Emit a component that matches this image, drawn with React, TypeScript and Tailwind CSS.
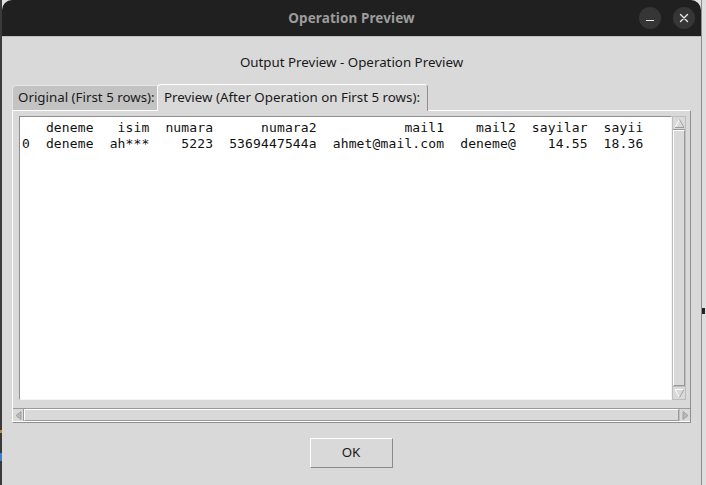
import React from 'react';

const header =
  '   deneme   isim  numara      numara2           mail1    mail2  sayilar  sayii';
const row0 =
  '0  deneme  ah***    5223  5369447544a  ahmet@mail.com  deneme@    14.55  18.36';

const UpArrow = () => (
  <svg width="11" height="11" viewBox="0 0 11 11">
    <path d="M5.5 1.5 L10 9.5 L1 9.5 Z" fill="none" stroke="#ffffff" strokeWidth="1" />
    <path d="M5.5 1.5 L10 9.5" fill="none" stroke="#9a9a9a" strokeWidth="1" />
    <path d="M1 9.5 L10 9.5" fill="none" stroke="#9a9a9a" strokeWidth="1" />
  </svg>
);

const DownArrow = () => (
  <svg width="11" height="11" viewBox="0 0 11 11">
    <path d="M1 1.5 L10 1.5 L5.5 9.5 Z" fill="none" stroke="#ffffff" strokeWidth="1" />
    <path d="M10 1.5 L5.5 9.5" fill="none" stroke="#9a9a9a" strokeWidth="1" />
  </svg>
);

const LeftArrow = () => (
  <svg width="9" height="11" viewBox="0 0 9 11">
    <path d="M2 5.5 L7 1.5 L7 9.5 Z" fill="#b8b8b8" stroke="#a0a0a0" strokeWidth="1" />
  </svg>
);

const RightArrow = () => (
  <svg width="9" height="11" viewBox="0 0 9 11">
    <path d="M7 5.5 L2 1.5 L2 9.5 Z" fill="#b8b8b8" stroke="#a0a0a0" strokeWidth="1" />
  </svg>
);

export default function App() {
  return (
    <div className="w-[706px] h-[485px] flex bg-[#e2e2e2] overflow-hidden font-['Noto_Sans',sans-serif]">
      {/* desktop behind, left edge */}
      <div className="w-[2px] h-full bg-[#3a3a3a] flex flex-col">
        <div className="h-[430px]" />
        <div className="h-[3px] bg-[#c9883a]" />
        <div className="h-[20px]" />
        <div className="h-[8px] bg-[#3a7fd0]" />
      </div>

      {/* window */}
      <div className="w-[700px] h-full flex flex-col border-r border-[#8c8c8c]">
        {/* title bar */}
        <div className="h-[36px] bg-[#202020] rounded-t-[10px] flex items-center relative shrink-0">
          <div className="flex-1 text-center text-[13.5px] font-bold text-[#9c9c9c] tracking-[0.1px]">
            Operation Preview
          </div>
          <div className="absolute right-[6px] top-[7px] flex gap-[12px]">
            <div className="w-[22px] h-[22px] rounded-full bg-[#363636] flex items-center justify-center">
              <div className="w-[8px] h-[1.5px] bg-[#e6e6e6] mt-[5px]" />
            </div>
            <div className="w-[22px] h-[22px] rounded-full bg-[#363636] flex items-center justify-center">
              <svg width="10" height="10" viewBox="0 0 10 10">
                <path d="M1.5 1.5 L8.5 8.5 M8.5 1.5 L1.5 8.5" stroke="#e6e6e6" strokeWidth="1.4" strokeLinecap="round" />
              </svg>
            </div>
          </div>
        </div>

        {/* body */}
        <div className="flex-1 bg-[#d9d9d9] border-t border-[#bdbdbd] flex flex-col px-[10px]">
          <div className="pt-[16px] h-[46px] text-center text-[13.33px] leading-[18px] text-[#1a1a1a]">
            Output Preview - Operation Preview
          </div>

          {/* tabs */}
          <div className="flex items-end h-[27px]">
            <div className="h-[25px] w-[145px] bg-[#c3c3c3] border-t border-l border-[#e6e6e6] rounded-tl-[4px] flex items-center pl-[5px] text-[13.33px] text-[#1a1a1a]">
              Original (First 5 rows):
            </div>
            <div className="h-[27px] w-[271px] bg-[#d9d9d9] border-t border-l border-white border-r-[1px] border-r-[#8f8f8f] rounded-t-[4px] flex items-center pl-[6px] text-[13.33px] text-[#1a1a1a] relative -mb-[1px] z-10">
              Preview (After Operation on First 5 rows):
            </div>
          </div>

          {/* panel */}
          <div className="w-[679px] h-[313px] border-t border-l border-white border-r border-b border-r-[#8f8f8f] border-b-[#8f8f8f] flex flex-col">
            <div className="flex pt-[5px] pl-[6px] pr-[4px] h-[297px]">
              {/* text area */}
              <div className="flex-1 h-[284px] bg-white border-t border-l border-[#8f8f8f] border-r border-b border-r-[#f4f4f4] border-b-[#f4f4f4] pl-[2px] pt-[3px] font-['DejaVu_Sans_Mono',monospace] text-[13px] tracking-[0.14px] leading-[16px] text-[#111] whitespace-pre">
                <div>{header}</div>
                <div>{row0}</div>
              </div>
              {/* vertical scrollbar */}
              <div className="w-[14px] h-[284px] bg-[#d9d9d9] border border-[#bdbdbd] flex flex-col">
                <div className="h-[13px] flex items-center justify-center border-b border-[#9a9a9a]">
                  <UpArrow />
                </div>
                <div className="flex-1 border-t border-l border-white border-r border-b border-r-[#9a9a9a] border-b-[#9a9a9a]" />
                <div className="h-[13px] flex items-center justify-center border-t border-[#bdbdbd]">
                  <DownArrow />
                </div>
              </div>
            </div>
            {/* horizontal scrollbar */}
            <div className="h-[14px] mt-[1px] border-t border-[#9a9a9a] border-b border-b-white flex">
              <div className="w-[11px] flex items-center justify-center border-r border-[#9a9a9a]">
                <LeftArrow />
              </div>
              <div className="flex-1 border-t border-l border-white border-r border-b border-r-[#9a9a9a] border-b-[#9a9a9a]" />
              <div className="w-[11px] flex items-center justify-center border-l border-[#bdbdbd]">
                <RightArrow />
              </div>
            </div>
          </div>

          {/* OK button */}
          <div className="flex justify-center pt-[15px]">
            <button className="ml-[-1px] w-[83px] h-[30px] bg-[#d9d9d9] border-t border-l border-white border-r border-b border-r-[#8a8a8a] border-b-[#8a8a8a] text-[13.33px] text-[#1a1a1a]">
              OK
            </button>
          </div>
        </div>
      </div>

      {/* desktop behind, right edge */}
      <div className="flex-1 h-full bg-[#dedede] flex flex-col">
        <div className="h-[308px]" />
        <div className="h-[6px] w-[3px] bg-[#222]" />
      </div>
    </div>
  );
}
